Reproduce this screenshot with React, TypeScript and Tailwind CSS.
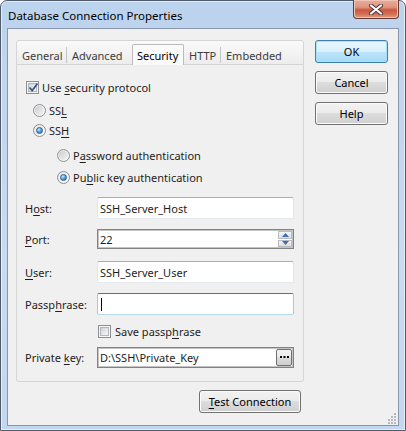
import React from 'react'

type Kids = { children?: React.ReactNode }

function Key({ children }: Kids) {
  return <span className="underline decoration-1 underline-offset-[2px]">{children}</span>
}

function CheckBox({ checked = false }: { checked?: boolean }) {
  return (
    <span className="relative flex h-[13px] w-[13px] shrink-0 items-center justify-center border border-[#8e8f8f] bg-[#f6f6f6]">
      <span className="flex h-[9px] w-[9px] items-center justify-center border border-[#b1b6bd] bg-[linear-gradient(135deg,#cfd3d8,#f7f7f7)]" />
      {checked && (
        <svg className="absolute left-[1px] top-[0px]" width="11" height="11" viewBox="0 0 11 11">
          <path d="M1.5 5.5 L4.2 8.5 L9.5 1.5" fill="none" stroke="#3d5586" strokeWidth="1.8" />
        </svg>
      )}
    </span>
  )
}

function Radio({ checked = false }: { checked?: boolean }) {
  return (
    <span className="flex h-[13px] w-[13px] shrink-0 items-center justify-center rounded-full border border-[#8e8f8f] bg-[linear-gradient(135deg,#e6e6e6,#fcfcfc)]">
      {checked ? (
        <span className="h-[7px] w-[7px] rounded-full border border-[#2a5f96] bg-[radial-gradient(circle_at_35%_30%,#c5eaff,#4a9ae0_55%,#1f5fa3)]" />
      ) : (
        <span className="h-[9px] w-[9px] rounded-full bg-[linear-gradient(135deg,#c9cdd2,#f4f4f4)]" />
      )}
    </span>
  )
}

function Button({ children, primary = false, className = '' }: Kids & { primary?: boolean; className?: string }) {
  const look = primary
    ? 'border-[#3c7fb1] bg-[linear-gradient(#eaf6fd,#d9f0fc_50%,#bee6fd_50%,#a7d9f5)] shadow-[inset_0_0_0_1px_#a6e3fb]'
    : 'border-[#707070] bg-[linear-gradient(#f2f2f2,#ebebeb_50%,#dddddd_50%,#cfcfcf)] shadow-[inset_0_0_0_1px_#fcfcfc]'
  return (
    <div className={`flex items-center justify-center rounded-[3px] border text-black ${look} ${className}`}>
      {children}
    </div>
  )
}

function TextBox({ value, focused = false }: { value?: string; focused?: boolean }) {
  const border = focused
    ? 'border-[#3d7bad] border-x-[#a4c9e3] border-b-[#b7d9ed]'
    : 'border-[#abadb3] border-x-[#e2e3ea] border-b-[#e3e9ef]'
  return (
    <div className={`flex h-[22px] w-[197px] items-center rounded-[2px] border bg-white pl-[2px] ${border}`}>
      {value}
      {focused && <span className="ml-[1px] h-[13px] w-[1px] bg-black" />}
    </div>
  )
}

function SpinBox({ value }: { value: string }) {
  return (
    <div className="flex h-[20px] w-[197px] items-center border border-[#828282] bg-white pl-[2px] shadow-[inset_0_0_0_1px_#c4c4c4]">
      <span className="flex-1">{value}</span>
      <div className="mr-[1px] flex h-[18px] w-[14px] flex-col gap-[1px] py-[1px]">
        <div className="flex flex-1 items-center justify-center border border-[#b8bcc2] bg-[linear-gradient(#f6f6f6,#dedede)]">
          <svg width="7" height="4" viewBox="0 0 7 4"><path d="M0 4 L3.5 0 L7 4 Z" fill="#3d6fb0" /></svg>
        </div>
        <div className="flex flex-1 items-center justify-center border border-[#b8bcc2] bg-[linear-gradient(#f6f6f6,#dedede)]">
          <svg width="7" height="4" viewBox="0 0 7 4"><path d="M0 0 L7 0 L3.5 4 Z" fill="#3d6fb0" /></svg>
        </div>
      </div>
    </div>
  )
}

function BrowseBox({ value }: { value: string }) {
  return (
    <div className="flex h-[21px] w-[197px] items-center border border-[#828282] bg-white pl-[2px] shadow-[inset_0_0_0_1px_#c4c4c4]">
      <span className="flex-1">{value}</span>
      <div className="mr-[1px] flex h-[17px] w-[16px] items-center justify-center rounded-[2px] border border-[#707070] bg-[linear-gradient(#f2f2f2,#ebebeb_50%,#dddddd_50%,#cfcfcf)]">
        <svg width="9" height="3" viewBox="0 0 9 3">
          <rect x="0" y="0" width="2" height="2" fill="#000" />
          <rect x="3.5" y="0" width="2" height="2" fill="#000" />
          <rect x="7" y="0" width="2" height="2" fill="#000" />
        </svg>
      </div>
    </div>
  )
}

function Field({ label, children, className = '' }: Kids & { label: React.ReactNode; className?: string }) {
  return (
    <div className={`flex items-center pl-[8px] ${className}`}>
      <span className="w-[72px] shrink-0">{label}</span>
      {children}
    </div>
  )
}

const tabs = [
  { name: 'General', w: 'w-[50px]', sep: true },
  { name: 'Advanced', w: 'w-[65px]', sep: false },
  { name: 'Security', w: 'w-[52px]', active: true },
  { name: 'HTTP', w: 'w-[37px]', sep: true },
  { name: 'Embedded', w: 'w-[70px]', sep: false },
]

function TabStrip() {
  return (
    <div className="flex h-[24px] items-end rounded-t-[3px] bg-[linear-gradient(#fafafa,#ececec)]">
      {tabs.map((t) =>
        t.active ? (
          <div
            key={t.name}
            className={`${t.w} flex h-[21px] items-center rounded-t-[2px] border border-b-0 border-[#bcbcbc] bg-[#fafafa] pl-[4px] text-black`}
          >
            {t.name}
          </div>
        ) : (
          <div key={t.name} className={`${t.w} flex h-[19px] items-center border-b border-[#d4d4d4] pl-[5px] text-[#3c3c3c]`}>
            <span className="flex-1">{t.name}</span>
            {t.sep && <span className="h-[16px] w-[1px] bg-[#c4c4c4]" />}
          </div>
        ),
      )}
      <div className="h-[19px] flex-1 border-b border-[#d4d4d4]" />
    </div>
  )
}

function SecurityPage() {
  return (
    <div className="flex flex-col">
      <label className="mt-[12px] flex h-[20px] items-center gap-[2px] pl-[9px]">
        <CheckBox checked />
        <span className="ml-[1px]">Use <Key>s</Key>ecurity protocol</span>
      </label>
      <label className="mt-[3px] flex h-[20px] items-center gap-[3px] pl-[16px]">
        <Radio />
        <span>SS<Key>L</Key></span>
      </label>
      <label className="flex h-[20px] items-center gap-[3px] pl-[16px]">
        <Radio checked />
        <span>SS<Key>H</Key></span>
      </label>
      <label className="mt-[5px] flex h-[20px] items-center gap-[3px] pl-[40px]">
        <Radio />
        <span>P<Key>a</Key>ssword authentication</span>
      </label>
      <label className="mt-[2px] flex h-[20px] items-center gap-[3px] pl-[40px]">
        <Radio checked />
        <span>Pu<Key>b</Key>lic key authentication</span>
      </label>

      <Field className="mt-[10px]" label={<>H<Key>o</Key>st:</>}>
        <TextBox value="SSH_Server_Host" />
      </Field>
      <Field className="mt-[10px]" label={<><Key>P</Key>ort:</>}>
        <SpinBox value="22" />
      </Field>
      <Field className="mt-[12px]" label={<><Key>U</Key>ser:</>}>
        <TextBox value="SSH_Server_User" />
      </Field>
      <Field className="mt-[10px]" label={<>Passp<Key>h</Key>rase:</>}>
        <TextBox focused />
      </Field>
      <label className="mt-[6px] flex h-[20px] items-center gap-[4px] pl-[81px]">
        <CheckBox />
        <span>Save passp<Key>h</Key>rase</span>
      </label>
      <Field className="mt-[6px]" label={<>Private <Key>k</Key>ey:</>}>
        <BrowseBox value="D:\SSH\Private_Key" />
      </Field>
    </div>
  )
}

export default function App() {
  return (
    <div className="h-[431px] w-[406px] overflow-hidden bg-white font-['Noto_Sans',sans-serif] text-[11px] leading-none text-[#1e1e1e]">
      <div className="flex h-full w-full flex-col rounded-t-[7px] border border-[#505c6c] bg-[linear-gradient(#bcd3ed,#c8dbf1_60%,#c3d8ef)] shadow-[inset_0_0_0_1px_#e3edf8]">
        <div className="flex h-[27px] shrink-0 items-start justify-between">
          <span className="mt-[9px] pl-[7px] text-[11.5px] text-black">Database Connection Properties</span>
          <div className="-mt-[1px] mr-[6px] flex h-[19px] w-[46px] items-center justify-center rounded-b-[4px] border border-t-0 border-[#6a3a30] bg-[linear-gradient(#e9ab9c,#e0947f_40%,#c9583f_55%,#d27358_80%,#e3a088)] shadow-[inset_0_0_0_1px_#f0c4b6]">
            <svg width="14" height="11" viewBox="0 0 14 11">
              <path d="M2 1.5 L12 9.5 M12 1.5 L2 9.5" stroke="#4a3333" strokeWidth="4" strokeLinecap="round" />
              <path d="M2 1.5 L12 9.5 M12 1.5 L2 9.5" stroke="#ffffff" strokeWidth="2.2" strokeLinecap="round" />
            </svg>
          </div>
        </div>

        <div className="relative mx-[6px] mb-[4px] flex-1 border border-[#8796aa] bg-[#f0f0f0]">
          <div className="flex pl-[8px] pt-[11px]">
            <div className="flex w-[288px] flex-col">
              <div className="h-[342px] rounded-[3px] border border-[#d5d5d5] bg-[#f0f0f0]">
                <TabStrip />
                <SecurityPage />
              </div>
              <div className="mt-[8px] flex justify-end pr-[3px]">
                <Button className="h-[23px] w-[102px]">
                  <span><Key>T</Key>est Connection</span>
                </Button>
              </div>
            </div>
            <div className="ml-[11px] flex flex-col gap-[8px]">
              <Button primary className="h-[23px] w-[73px]">OK</Button>
              <Button className="h-[23px] w-[73px]">Cancel</Button>
              <Button className="h-[23px] w-[73px]">Help</Button>
            </div>
          </div>
          <svg className="absolute bottom-[1px] right-[1px]" width="11" height="11" viewBox="0 0 11 11">
            {[
              [8, 0], [8, 3], [5, 3], [8, 6], [5, 6], [2, 6], [8, 9], [5, 9], [2, 9],
            ].map(([x, y]) => (
              <rect key={`${x}-${y}`} x={x} y={y} width="2" height="2" fill="#b3b9c2" />
            ))}
          </svg>
        </div>
      </div>
    </div>
  )
}
